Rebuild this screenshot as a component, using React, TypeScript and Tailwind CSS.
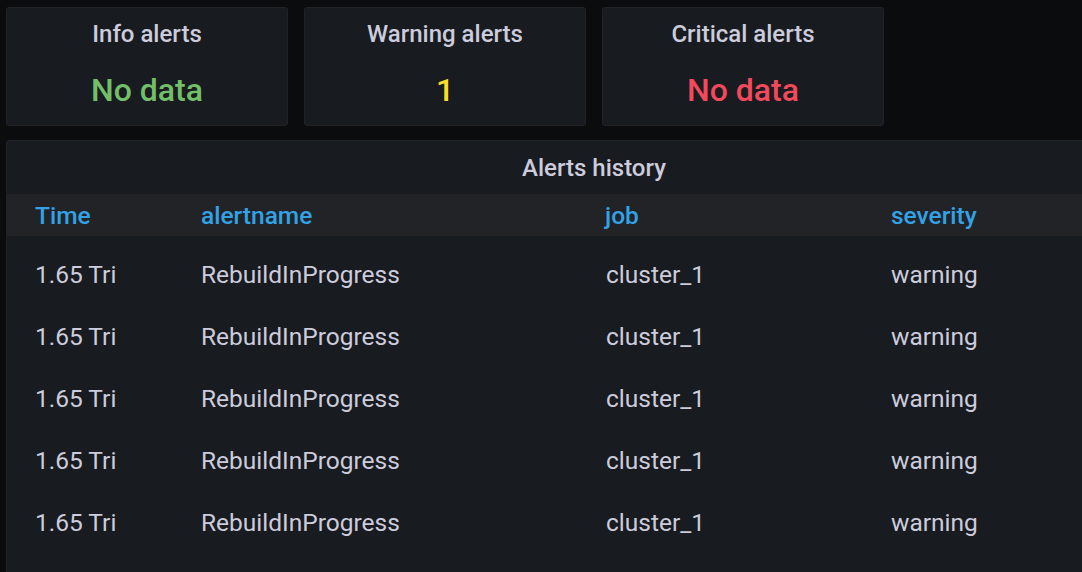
import React from "react";

const rows = Array.from({ length: 5 }, () => ({
  time: "1.65 Tri",
  name: "RebuildInProgress",
  job: "cluster_1",
  sev: "warning",
}));

function Stat({ title, value, color }: { title: string; value: string; color: string }) {
  return (
    <div className="w-[282px] h-[119px] shrink-0 rounded-[3px] border border-[#202226] bg-[#181b1f] flex flex-col items-center">
      <div className="mt-[11px] h-[30px] leading-[30px] text-[24px] font-medium text-[#ccccdc]">{title}</div>
      <div className={`mt-[21px] h-[40px] leading-[40px] text-[32px] font-medium ${color}`}>{value}</div>
    </div>
  );
}

export default function App() {
  return (
    <div
      className="w-[1082px] h-[572px] overflow-hidden bg-[#0b0c0e] relative"
      style={{ fontFamily: "Roboto, 'Liberation Sans', sans-serif" }}
    >
      <div className="flex gap-[16px] pl-[6px] pt-[7px]">
        <Stat title="Info alerts" value="No data" color="text-[#73bf69]" />
        <Stat title="Warning alerts" value="1" color="text-[#fade2a]" />
        <Stat title="Critical alerts" value="No data" color="text-[#f2495c]" />
      </div>
      <div className="ml-[6px] mt-[14px] w-[1176px] h-[460px] rounded-[3px] border border-[#202226] bg-[#181b1f]">
        <div className="h-[53px] pt-[12px] text-center text-[24px] leading-[30px] font-medium text-[#ccccdc]">
          Alerts history
        </div>
        <div className="h-[42px] pt-[3px] bg-[#212327] flex items-center text-[24.5px] font-medium text-[#33a2e5]">
          <div className="w-[194px] pl-[28px]">Time</div>
          <div className="w-[404px]">alertname</div>
          <div className="w-[286px]">job</div>
          <div>severity</div>
        </div>
        <div className="pt-[8px]">
          {rows.map((r, i) => (
            <div key={i} className="h-[62.2px] flex items-center text-[24.5px] text-[#ccccdc]">
              <div className="w-[194px] pl-[28px]">{r.time}</div>
              <div className="w-[404px]">{r.name}</div>
              <div className="w-[286px] pl-[1px]">{r.job}</div>
              <div>{r.sev}</div>
            </div>
          ))}
        </div>
      </div>
    </div>
  );
}
